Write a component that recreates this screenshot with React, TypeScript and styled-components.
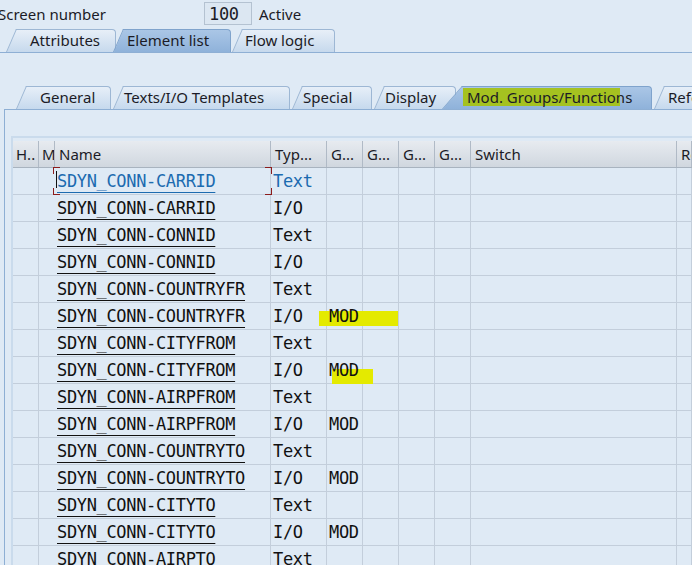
import React from "react";
import styled, { createGlobalStyle } from "styled-components";

const SANS = `"Noto Sans", "Open Sans", sans-serif`;
const MONO = `"DejaVu Sans Mono", "Liberation Mono", monospace`;

const COLUMNS = "26px 16px 216px 56px 36px 36px 36px 36px 206px 1fr";

interface TabItem {
  label: string;
  offset: number;
  width: number;
  inset: number;
  slant?: number;
  active?: boolean;
  marked?: boolean;
}

interface ElementRow {
  name: string;
  type: string;
  mod?: boolean;
  marker?: { left: number; top: number; width: number };
}

const topTabs: TabItem[] = [
  { label: "Attributes", offset: 6, width: 110, inset: 24 },
  { label: "Element list", offset: -3, width: 118, inset: 14, active: true },
  { label: "Flow logic", offset: 1, width: 103, inset: 13 },
];

const innerTabs: TabItem[] = [
  { label: "General", offset: 16, width: 95, inset: 24 },
  { label: "Texts/I/O Templates", offset: 2, width: 177, inset: 11 },
  { label: "Special", offset: 2, width: 80, inset: 11 },
  { label: "Display", offset: 2, width: 82, inset: 11 },
  {
    label: "Mod. Groups/Functions",
    offset: -14,
    width: 210,
    inset: 25,
    slant: 20,
    active: true,
    marked: true,
  },
  { label: "References", offset: 2, width: 120, inset: 14 },
];

const headers = ["H..", "M", "Name", "Typ...", "G...", "G...", "G...", "G...", "Switch", "Re"];

const rows: ElementRow[] = [
  { name: "SDYN_CONN-CARRID", type: "Text" },
  { name: "SDYN_CONN-CARRID", type: "I/O" },
  { name: "SDYN_CONN-CONNID", type: "Text" },
  { name: "SDYN_CONN-CONNID", type: "I/O" },
  { name: "SDYN_CONN-COUNTRYFR", type: "Text" },
  { name: "SDYN_CONN-COUNTRYFR", type: "I/O", mod: true, marker: { left: -8, top: 8, width: 79 } },
  { name: "SDYN_CONN-CITYFROM", type: "Text" },
  { name: "SDYN_CONN-CITYFROM", type: "I/O", mod: true, marker: { left: 5, top: 12, width: 41 } },
  { name: "SDYN_CONN-AIRPFROM", type: "Text" },
  { name: "SDYN_CONN-AIRPFROM", type: "I/O", mod: true },
  { name: "SDYN_CONN-COUNTRYTO", type: "Text" },
  { name: "SDYN_CONN-COUNTRYTO", type: "I/O", mod: true },
  { name: "SDYN_CONN-CITYTO", type: "Text" },
  { name: "SDYN_CONN-CITYTO", type: "I/O", mod: true },
  { name: "SDYN_CONN-AIRPTO", type: "Text" },
];

const TabStripRow: React.FC<{ tabs: TabItem[] }> = ({ tabs }) => (
  <>
    {tabs.map((tab) => (
      <Tab
        key={tab.label}
        $offset={tab.offset}
        $width={tab.width}
        $inset={tab.inset}
        $slant={tab.slant ?? 10}
        $active={tab.active}
      >
        {tab.marked && <TabMarker />}
        <TabLabel>{tab.label}</TabLabel>
      </Tab>
    ))}
  </>
);

export default function App() {
  return (
    <Page>
      <GlobalStyle />
      <TopBar>
        <FieldLabel>Screen number</FieldLabel>
        <NumberField>100</NumberField>
        <Status>Active</Status>
      </TopBar>
      <TopTabs>
        <TabStripRow tabs={topTabs} />
      </TopTabs>
      <Body>
        <InnerTabs>
          <TabStripRow tabs={innerTabs} />
        </InnerTabs>
        <Panel>
          <Table>
            <HeaderRow>
              {headers.map((h, i) => (
                <HeaderCell key={i}>{h}</HeaderCell>
              ))}
            </HeaderRow>
            {rows.map((row, i) => {
              const focused = i === 0;
              return (
                <DataRow key={i}>
                  <Cell />
                  <Cell $open />
                  <NameCell $focused={focused}>
                    {focused && (
                      <FocusFrame>
                        <Corner $top $left />
                        <Corner $top />
                        <Corner $left />
                        <Corner />
                        <Caret />
                      </FocusFrame>
                    )}
                    <NameLink>{row.name}</NameLink>
                  </NameCell>
                  <Cell $focused={focused}>{row.type}</Cell>
                  <Cell>
                    {row.marker && (
                      <Marker
                        style={{
                          left: row.marker.left,
                          top: row.marker.top,
                          width: row.marker.width,
                        }}
                      />
                    )}
                    {row.mod && <CellText>MOD</CellText>}
                  </Cell>
                  <Cell />
                  <Cell />
                  <Cell />
                  <Cell />
                  <Cell />
                </DataRow>
              );
            })}
          </Table>
        </Panel>
      </Body>
    </Page>
  );
}

/**
 *
 * Styles
 *
 */

const GlobalStyle = createGlobalStyle`
  html, body {
    margin: 0;
    padding: 0;
    background: #dfeaf5;
    overflow: hidden;
  }
  body {
    font-family: ${SANS};
  }
`;

const Page = styled.div`
  width: 692px;
  height: 565px;
  overflow: hidden;
  background: #dfeaf5;
  color: #1b1b26;
  font-family: ${SANS};
  font-size: 15px;
`;

const TopBar = styled.div`
  display: flex;
  align-items: center;
  height: 27px;
`;

const FieldLabel = styled.span`
  flex: none;
  width: 206px;
  margin-left: -2px;
`;

const NumberField = styled.div`
  flex: none;
  box-sizing: border-box;
  width: 48px;
  height: 23px;
  padding-left: 4px;
  display: flex;
  align-items: center;
  border: 1px solid #b4c2d1;
  background: #dce7f2;
  font-family: ${MONO};
  font-size: 17px;
  letter-spacing: -0.34px;
`;

const Status = styled.span`
  margin-left: 7px;
`;

const TabStrip = styled.div`
  display: flex;
  align-items: flex-end;
  height: 23px;
`;

const TopTabs = styled(TabStrip)`
  margin-top: 2px;
  border-bottom: 1px solid #8eafd4;
`;

const InnerTabs = styled(TabStrip)``;

const Tab = styled.div<{
  $offset: number;
  $width: number;
  $inset: number;
  $slant: number;
  $active?: boolean;
}>`
  position: relative;
  z-index: ${(p) => (p.$active ? 2 : 1)};
  flex: none;
  box-sizing: border-box;
  height: 23px;
  width: ${(p) => p.$width}px;
  margin-left: ${(p) => p.$offset}px;
  padding-left: ${(p) => p.$inset}px;
  display: flex;
  align-items: center;
  white-space: nowrap;

  &::before,
  &::after {
    content: "";
    position: absolute;
    top: 0;
    bottom: 0;
    z-index: -1;
    background: ${(p) =>
      p.$active
        ? "linear-gradient(#aac6e6, #8fb2da)"
        : "linear-gradient(#e7eff8, #c6d9ed)"};
    border-top: 1px solid ${(p) => (p.$active ? "#7fa3cc" : "#9db7d4")};
  }

  &::before {
    left: ${(p) => p.$slant + 2}px;
    right: 0;
    border-right: 1px solid ${(p) => (p.$active ? "#7fa3cc" : "#9db7d4")};
    border-top-right-radius: 4px;
  }

  &::after {
    left: 0;
    width: ${(p) => p.$slant + 14}px;
    border-left: 1px solid ${(p) => (p.$active ? "#7fa3cc" : "#9db7d4")};
    transform-origin: 0 100%;
    transform: skewX(${(p) => -(Math.atan(p.$slant / 23) * 180) / Math.PI}deg);
  }
`;

const TabLabel = styled.span`
  position: relative;
  z-index: 1;
  margin-top: -1px;
`;

const TabMarker = styled.span`
  position: absolute;
  left: 21px;
  top: 2px;
  width: 157px;
  height: 18px;
  background: #a5c220;
`;

const Body = styled.div`
  padding-top: 33px;
`;

const Panel = styled.div`
  margin-left: 4px;
  padding: 26px 0 0 6px;
  border-left: 1px solid #8eafd4;
  border-top: 1px solid #8eafd4;
  height: 600px;
`;

const Table = styled.div`
  border-top: 2px solid #cadbec;
  border-left: 2px solid #cadbec;
  padding-top: 3px;
`;

const HeaderRow = styled.div`
  display: grid;
  grid-template-columns: ${COLUMNS};
  height: 26px;
  border-bottom: 1px solid #a8b3bf;
  background: linear-gradient(#e7ebf0, #d0d7df);
`;

const HeaderCell = styled.div`
  display: flex;
  align-items: center;
  padding-left: 4px;
  overflow: hidden;
  white-space: nowrap;
  border-right: 1px solid #b0bac6;
  &:first-child,
  &:nth-child(2) {
    padding-left: 3px;
  }
`;

const DataRow = styled.div`
  display: grid;
  grid-template-columns: ${COLUMNS};
  height: 26px;
  border-bottom: 1px solid #c3cedb;
  font-family: ${MONO};
  font-size: 17px;
  letter-spacing: -0.34px;
`;

const Cell = styled.div<{ $open?: boolean; $focused?: boolean }>`
  position: relative;
  display: flex;
  align-items: center;
  padding-left: 2px;
  white-space: nowrap;
  color: ${(p) => (p.$focused ? "#1c6bb0" : "#111")};
  border-right: ${(p) => (p.$open ? "none" : "1px solid #c3cedb")};
`;

const NameCell = styled(Cell)``;

const NameLink = styled.span`
  position: relative;
  text-decoration: underline;
  text-underline-offset: 5px;
  text-decoration-thickness: 1px;
  text-decoration-skip-ink: none;
`;

const CellText = styled.span`
  position: relative;
`;

const Marker = styled.span`
  position: absolute;
  height: 15px;
  background: #e4ea00;
`;

const FocusFrame = styled.span`
  position: absolute;
  left: -2px;
  right: -2px;
  top: -1px;
  bottom: -1px;
  pointer-events: none;
`;

const Corner = styled.span<{ $top?: boolean; $left?: boolean }>`
  position: absolute;
  width: 6px;
  height: 6px;
  ${(p) =>
    p.$top
      ? "top: 0; border-top: 1.5px solid #8c1c1c;"
      : "bottom: 0; border-bottom: 1.5px solid #8c1c1c;"}
  ${(p) =>
    p.$left
      ? "left: 0; border-left: 1.5px solid #8c1c1c;"
      : "right: 0; border-right: 1.5px solid #8c1c1c;"}
`;

const Caret = styled.span`
  position: absolute;
  left: 3px;
  top: 4px;
  width: 1px;
  height: 17px;
  background: #111;
`;
